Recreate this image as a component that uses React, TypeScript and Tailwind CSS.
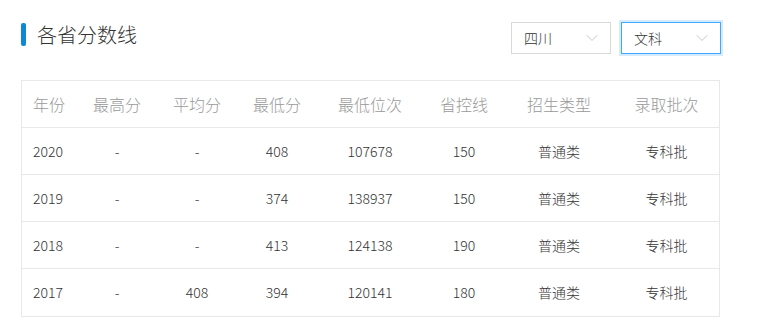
import { ChevronDown } from 'lucide-react';

const headers = ['年份', '最高分', '平均分', '最低分', '最低位次', '省控线', '招生类型', '录取批次'];

const rows = [
  ['2020', '-', '-', '408', '107678', '150', '普通类', '专科批'],
  ['2019', '-', '-', '374', '138937', '150', '普通类', '专科批'],
  ['2018', '-', '-', '413', '124138', '190', '普通类', '专科批'],
  ['2017', '-', '408', '394', '120141', '180', '普通类', '专科批'],
];

const cols = 'grid grid-cols-[56px_78px_82px_78px_108px_80px_110px_105px]';

const Select = ({ label, active }: { label: string; active?: boolean }) => (
  <div
    className={
      'flex items-center justify-between w-[100px] h-[32px] pl-[12px] pr-[8px] bg-white text-[14px] text-[#333] ' +
      (active
        ? 'border border-[#40a9ff] shadow-[0_0_0_2px_rgba(64,169,255,0.22)]'
        : 'border border-[#d9d9d9]')
    }
  >
    <span>{label}</span>
    <ChevronDown size={20} strokeWidth={1.1} className="text-[#bfbfbf]" />
  </div>
);

export default function App() {
  return (
    <div
      className="w-[757px] h-[324px] bg-white pl-[21px] pt-[22px] font-light"
      style={{ fontFamily: '"Noto Sans CJK SC", "Liberation Sans", sans-serif' }}
    >
      <div className="flex items-start justify-between w-[700px] h-[32px]">
        <div className="flex items-center mt-[1px]">
          <div className="w-[5px] h-[23px] rounded-[2px] bg-[#0b88d6]" />
          <h2 className="ml-[11px] text-[20px] leading-none text-[#333]">各省分数线</h2>
        </div>
        <div className="flex items-center gap-[10px]">
          <Select label="四川" />
          <Select label="文科" active />
        </div>
      </div>

      <div className="mt-[26px] w-[699px] border border-[#e8e8e8]">
        <div className={cols + ' h-[47px] items-center border-b border-[#e8e8e8] text-[16px] text-[#999]'}>
          {headers.map((h, i) => (
            <div key={h} className={i === 0 ? 'pl-[11px]' : 'text-center'}>
              {h}
            </div>
          ))}
        </div>
        {rows.map((r, ri) => (
          <div
            key={r[0]}
            className={
              cols +
              ' h-[47px] items-center text-[14px] text-[#333] ' +
              (ri < rows.length - 1 ? 'border-b border-[#e8e8e8]' : 'h-[46px]')
            }
          >
            {r.map((c, i) => (
              <div key={i} className={i === 0 ? 'pl-[11px]' : 'text-center'}>
                {c}
              </div>
            ))}
          </div>
        ))}
      </div>
    </div>
  );
}
